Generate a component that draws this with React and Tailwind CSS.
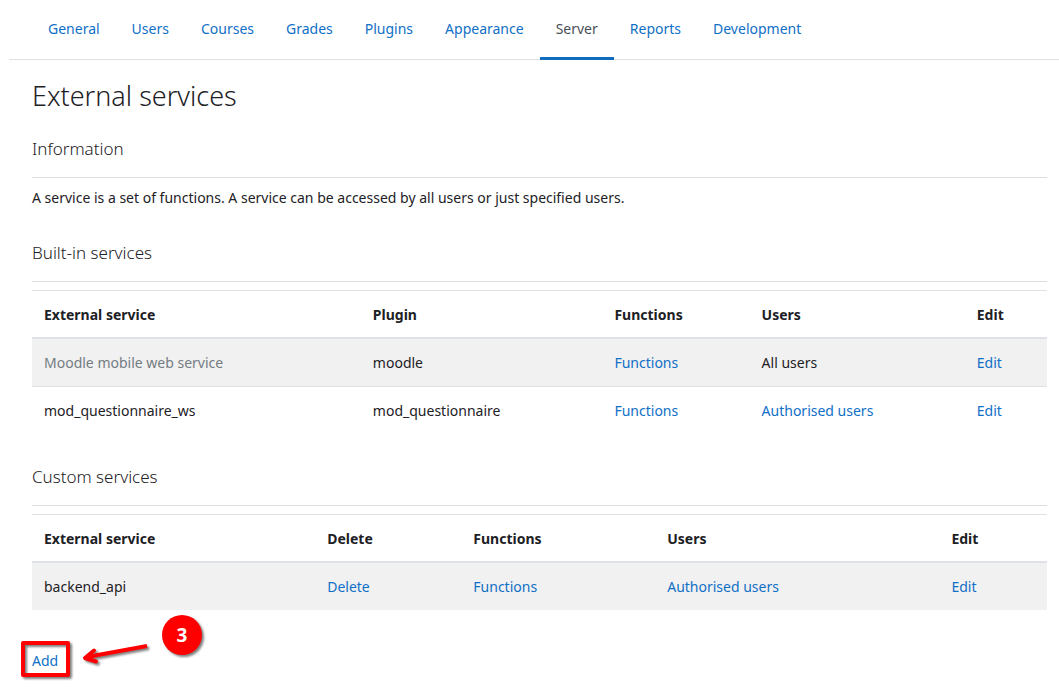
const tabs = ["General", "Users", "Courses", "Grades", "Plugins", "Appearance", "Server", "Reports", "Development"];

function Link({ children }) {
  return <a href="#" className="text-[#106fc6] hover:underline">{children}</a>;
}

function SectionTitle({ children }) {
  return <h3 className="border-b border-[#dfdfdf] pb-4 text-[17px] leading-6 font-light">{children}</h3>;
}

function ServiceTable({ label, columns, rows }) {
  return (
    <table aria-label={label} className="mt-2 w-full table-fixed border-collapse text-left">
      <colgroup>
        {columns.map((c) => <col key={c.name} className={c.width} />)}
      </colgroup>
      <thead>
        <tr className="border-t border-b-2 border-[#dee2e6]">
          {columns.map((c) => <th key={c.name} scope="col" className="px-3 pt-[13px] pb-[11px] leading-[22px] font-bold">{c.name}</th>)}
        </tr>
      </thead>
      <tbody>
        {rows.map((row, i) => (
          <tr key={i} className="border-[#dee2e6] odd:bg-[#f1f1f1] not-first:border-t">
            {row.map((cell, j) => <td key={j} className="p-3 leading-[23px]">{cell}</td>)}
          </tr>
        ))}
      </tbody>
    </table>
  );
}

const builtInColumns = [
  { name: "External service", width: "w-[32.4%]" },
  { name: "Plugin", width: "w-[23.8%]" },
  { name: "Functions", width: "w-[14.5%]" },
  { name: "Users", width: "w-[21.2%]" },
  { name: "Edit", width: "w-[8.1%]" },
];
const builtInRows = [
  [<span className="text-[#747c83]">Moodle mobile web service</span>, "moodle", <Link>Functions</Link>, "All users", <Link>Edit</Link>],
  ["mod_questionnaire_ws", "mod_questionnaire", <Link>Functions</Link>, <Link>Authorised users</Link>, <Link>Edit</Link>],
];
const customColumns = [
  { name: "External service", width: "w-[27.9%]" },
  { name: "Delete", width: "w-[14.4%]" },
  { name: "Functions", width: "w-[19.1%]" },
  { name: "Users", width: "w-[28%]" },
  { name: "Edit", width: "w-[10.6%]" },
];
const customRows = [
  ["backend_api", <Link>Delete</Link>, <Link>Functions</Link>, <Link>Authorised users</Link>, <Link>Edit</Link>],
];

export default function App() {
  return (
    <div className="min-h-screen bg-white font-['Noto_Sans',sans-serif] text-[14px] leading-6 text-[#1d2125]">
      <nav aria-label="Site administration" className="ml-[9px] flex border-b border-[#dee2e6] pl-[23px]">
        {tabs.map((tab) => (
          <a
            key={tab}
            href="#"
            aria-current={tab === "Server" ? "page" : undefined}
            className="-mb-px border-b-3 border-transparent px-4 pt-[17px] pb-4 text-[#106fc6] aria-[current=page]:border-[#0f6cbf] aria-[current=page]:text-[#495057]"
          >
            {tab}
          </a>
        ))}
      </nav>
      <main className="pr-3 pl-8">
        <h2 className="pt-4 text-[27px] leading-10 font-light">External services</h2>
        <div className="mt-[21px]">
          <SectionTitle>Information</SectionTitle>
        </div>
        <p className="mt-2">A service is a set of functions. A service can be accessed by all users or just specified users.</p>
        <section className="mt-[31px]">
          <SectionTitle>Built-in services</SectionTitle>
          <ServiceTable label="Built-in services" columns={builtInColumns} rows={builtInRows} />
        </section>
        <section className="mt-[31px]">
          <SectionTitle>Custom services</SectionTitle>
          <ServiceTable label="Custom services" columns={customColumns} rows={customRows} />
        </section>
        <div className="relative mt-[39px] w-fit">
          <Link>Add</Link>
          <svg aria-hidden="true" className="pointer-events-none absolute -top-12 -left-8 h-24 w-60" viewBox="0 601 240 96">
            <g className="drop-shadow-[2px_2px_1px_rgba(0,0,0,0.5)]">
              <rect x="23" y="643" width="45" height="32" fill="none" stroke="#f00" strokeWidth="4" strokeLinejoin="round" />
              <path d="M147 646L87 657" stroke="#f00" strokeWidth="4" />
              <path d="M94 650.500L85 658L96 661.500" fill="none" stroke="#f00" strokeWidth="4" strokeLinecap="round" strokeLinejoin="round" />
              <circle cx="182" cy="635" r="20" fill="#f00" />
            </g>
            <text x="182" y="642" textAnchor="middle" fill="#fff" fontSize="19" fontWeight="700">3</text>
          </svg>
        </div>
      </main>
    </div>
  );
}
